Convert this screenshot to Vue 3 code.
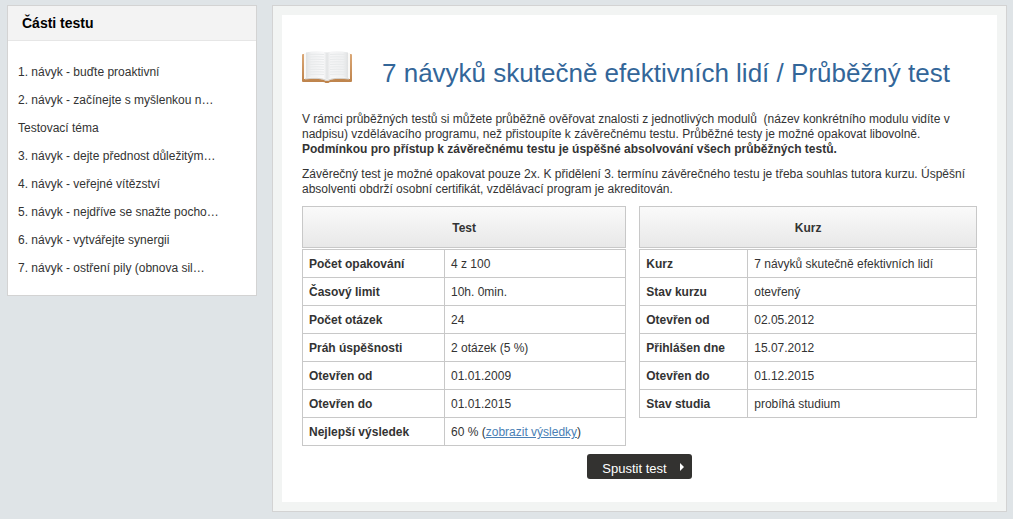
<script setup>
const parts = [
  '1. návyk - buďte proaktivní',
  '2. návyk - začínejte s myšlenkou n…',
  'Testovací téma',
  '3. návyk - dejte přednost důležitým…',
  '4. návyk - veřejné vítězství',
  '5. návyk - nejdříve se snažte pocho…',
  '6. návyk - vytvářejte synergii',
  '7. návyk - ostření pily (obnova sil…',
]

const tables = [
  {
    title: 'Test',
    kind: 'test',
    rows: [
      { label: 'Počet opakování', value: '4 z 100' },
      { label: 'Časový limit', value: '10h. 0min.' },
      { label: 'Počet otázek', value: '24' },
      { label: 'Práh úspěšnosti', value: '2 otázek (5 %)' },
      { label: 'Otevřen od', value: '01.01.2009' },
      { label: 'Otevřen do', value: '01.01.2015' },
      { label: 'Nejlepší výsledek', value: '60 %', link: 'zobrazit výsledky' },
    ],
  },
  {
    title: 'Kurz',
    kind: 'course',
    rows: [
      { label: 'Kurz', value: '7 návyků skutečně efektivních lidí' },
      { label: 'Stav kurzu', value: 'otevřený' },
      { label: 'Otevřen od', value: '02.05.2012' },
      { label: 'Přihlášen dne', value: '15.07.2012' },
      { label: 'Otevřen do', value: '01.12.2015' },
      { label: 'Stav studia', value: 'probíhá studium' },
    ],
  },
]

const pageLines = Array.from({ length: 9 }, (_, i) => 3.5 + i * 2.5)
</script>

<template>
  <div class="page">
    <aside class="sidebar">
      <h2 class="sidebar-title">Části testu</h2>
      <ul class="parts">
        <li v-for="part in parts" :key="part"><a href="#">{{ part }}</a></li>
      </ul>
    </aside>

    <main class="frame">
      <div class="content">
        <header class="heading">
          <svg class="book" viewBox="0 0 50 32" width="50" height="32" aria-hidden="true">
            <defs>
              <linearGradient id="cover" x1="0" y1="0" x2="0" y2="1">
                <stop offset="0" stop-color="#dba877" />
                <stop offset="1" stop-color="#bd824a" />
              </linearGradient>
              <linearGradient id="leaf" x1="0" y1="0" x2="1" y2="0">
                <stop offset="0" stop-color="#dfe1e2" />
                <stop offset="0.12" stop-color="#f0f1f2" />
                <stop offset="0.42" stop-color="#f9f9fa" />
                <stop offset="0.5" stop-color="#e2e4e5" />
                <stop offset="0.58" stop-color="#f5f5f6" />
                <stop offset="0.88" stop-color="#f0f1f2" />
                <stop offset="1" stop-color="#dfe1e2" />
              </linearGradient>
            </defs>
            <path d="M0 4Q0 3 1 3H49Q50 3 50 4V30Q50 31 49 31H29Q27 31 26.500 32H23.500Q23 31 21 31H1Q0 31 0 30Z" fill="url(#cover)" />
            <path d="M2 2H48V28Q34 27 29 28.500Q26 30 25 30Q24 30 21 28.500Q16 27 2 28Z" fill="#faf9f7" />
            <path d="M3 28Q17 26 25 29.500Q33 26 47 28" fill="none" stroke="#d2d1cf" stroke-width="1" />
            <path d="M4 1.500Q16 -1 25 1.500Q34 -1 46 1.500V27Q32 24.500 25 28.500Q18 24.500 4 27Z" fill="url(#leaf)" />
            <path v-for="y in pageLines" :key="y" :d="`M6 ${y}Q16 ${y - 0.5} 22 ${y}M28 ${y}Q34 ${y - 0.5} 44 ${y}`" fill="none" stroke="#e8eaeb" stroke-width="1" />
          </svg>
          <h1>7 návyků skutečně efektivních lidí / Průběžný test</h1>
        </header>

        <div class="intro">
          <p>
            V rámci průběžných testů si můžete průběžně ověřovat znalosti z jednotlivých modulů&nbsp; (název konkrétního modulu vidíte v
            nadpisu) vzdělávacího programu, než přistoupíte k závěrečnému testu. Průběžné testy je možné opakovat libovolně.<br />
            <strong>Podmínkou pro přístup k závěrečnému testu je úspěšné absolvování všech průběžných testů.</strong>
          </p>
          <p>
            Závěrečný test je možné opakovat pouze 2x. K přidělení 3. termínu závěrečného testu je třeba souhlas tutora kurzu. Úspěšní
            absolventi obdrží osobní certifikát, vzdělávací program je akreditován.
          </p>
        </div>

        <div class="tables">
          <table v-for="table in tables" :key="table.title" :class="table.kind">
            <caption>{{ table.title }}</caption>
            <tbody>
              <tr v-for="row in table.rows" :key="row.label">
                <th scope="row">{{ row.label }}</th>
                <td>{{ row.value }}<template v-if="row.link"> (<a href="#">{{ row.link }}</a>)</template></td>
              </tr>
            </tbody>
          </table>
        </div>

        <div class="actions">
          <button type="button">
            <span>Spustit test</span>
            <svg viewBox="0 0 4 8" width="4" height="8" aria-hidden="true"><path d="M0 0L4 4L0 8Z" fill="#fff" /></svg>
          </button>
        </div>
      </div>
    </main>
  </div>
</template>

<style>
body {
  background: #dfe4e7;
}
</style>

<style scoped>
.page {
  display: grid;
  grid-template-columns: 250px minmax(0, 1fr);
  align-items: start;
  gap: 15px;
  padding: 5px 6px 7px 7px;
  color: #333;
  font: 12px/15px "Liberation Sans", Arial, sans-serif;
}

.sidebar {
  box-sizing: border-box;
  border: 1px solid #d3d3d3;
  background: #fff;
}

.sidebar-title {
  margin: 0;
  padding: 9px 14px 8px;
  border-bottom: 1px solid #e6e6e6;
  background: #f3f3f3;
  color: #000;
  font-size: 14px;
  line-height: 17px;
}

.parts {
  margin: 0;
  padding: 17px 10px 13px;
  list-style: none;
}

.parts li {
  line-height: 28px;
}

.parts a {
  color: #333;
  text-decoration: none;
}

.frame {
  border: 1px solid #d3d3d3;
  background: #f2f4f3;
  padding: 9px;
}

.content {
  padding: 36px 20px 23px;
  background: #fff;
}

.heading {
  display: flex;
  align-items: flex-start;
  gap: 30px;
  margin-bottom: 21px;
}

.book {
  flex: none;
}

h1 {
  margin: 0;
  padding-top: 4px;
  color: #369;
  font-size: 26px;
  font-weight: 400;
  line-height: 36px;
}

.intro {
  display: grid;
  gap: 10px;
  margin-bottom: 9px;
}

p {
  margin: 0;
}

.tables {
  display: grid;
  grid-template-columns: 48fr 50fr;
  align-items: start;
  gap: 13px;
}

table {
  width: 100%;
  border-collapse: collapse;
  table-layout: fixed;
}

caption {
  margin-bottom: 1px;
  padding-top: 2px;
  border: 1px solid #c8c8c8;
  background: linear-gradient(#fafafa, #e8e8e8);
  font-weight: 700;
  line-height: 38px;
}

th,
td {
  height: 15px;
  padding: 7px 6px 5px;
  border: 1px solid #c8c8c8;
  text-align: left;
}

.test th {
  width: 129px;
}

.course th {
  width: 95px;
}

td a {
  color: #4a7fb5;
}

.actions {
  display: flex;
  justify-content: center;
  margin-top: 8px;
}

button {
  display: flex;
  align-items: center;
  gap: 13px;
  padding: 6px 8px 2px 15px;
  border: 0;
  border-radius: 3px;
  background: #333230;
  color: #fff;
  font: 13px/17px "Liberation Sans", Arial, sans-serif;
}

button svg {
  margin-bottom: 4px;
}
</style>
